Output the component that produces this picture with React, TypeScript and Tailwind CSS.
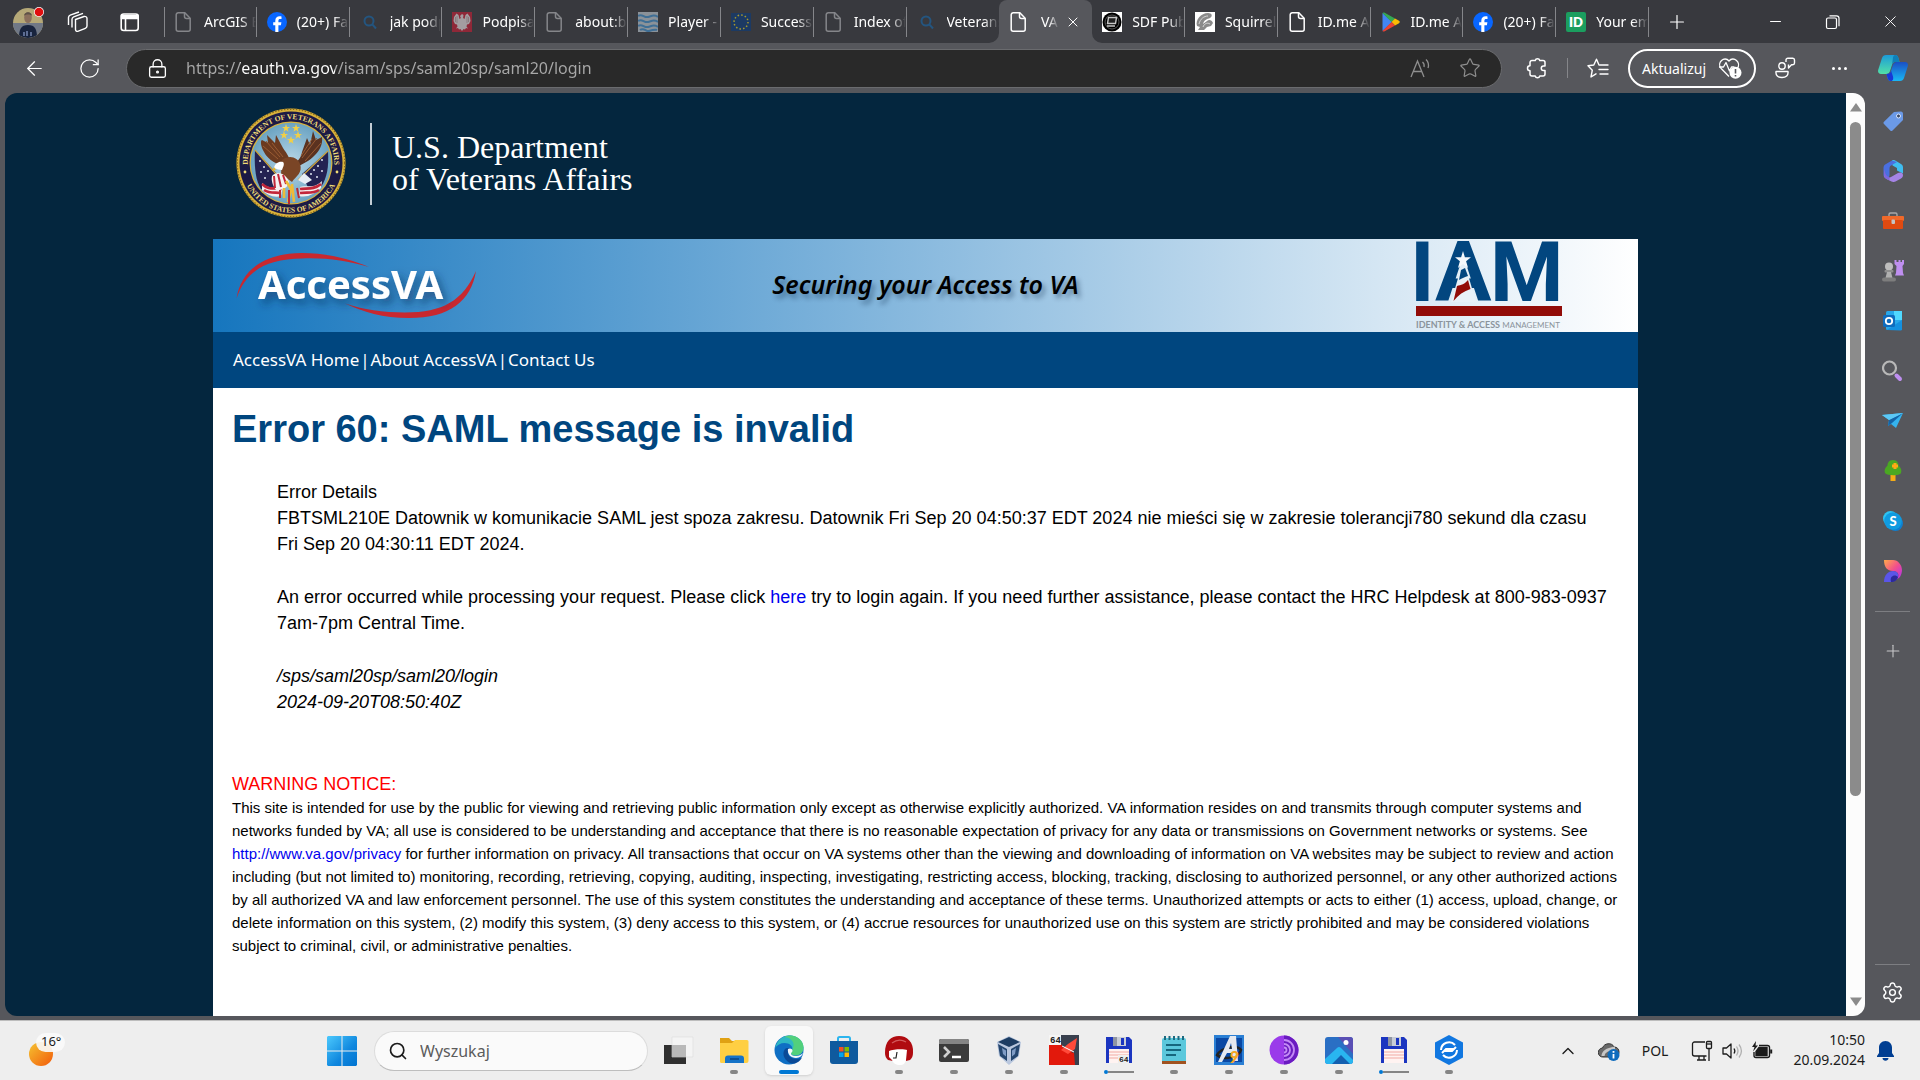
import React from "react";
import {
  ArrowLeft,
  RotateCw,
  LockKeyhole,
  Star,
  Plus,
  X,
  Minus,
  Settings,
  ChevronUp,
  Search,
} from "lucide-react";

type P = { className?: string };

const FileIcon = ({ className = "" }: P) => (
  <svg viewBox="0 0 20 20" className={className} fill="none" stroke="currentColor" strokeWidth="1.5">
    <path d="M4.2 .8h6.6l5.4 5.4v11a2 2 0 0 1-2 2h-10a2 2 0 0 1-2-2v-14.400a2 2 0 0 1 2-2z" />
    <path d="M10.500 .8v3.700a2 2 0 0 0 2 2h3.600" />
  </svg>
);

const FacebookIcon = ({ className = "" }: P) => (
  <svg viewBox="0 0 20 20" className={className}>
    <circle cx="10" cy="10" r="10" fill="#0866ff" />
    <path d="M8.300 19.900v-6.600H6.200v-3h2.100V8.900c0-3.200 1.500-4.700 4.500-4.700.6 0 1.300.1 1.700.2V7.100h-1.300c-1.300 0-1.800.5-1.800 1.900v1.300h3l-.5 3h-2.500v6.600z" fill="#fff" />
  </svg>
);

const BlueSearch = ({ className = "" }: P) => (
  <svg viewBox="0 0 20 20" className={className} fill="none" stroke="#24557f" strokeWidth="2">
    <circle cx="9" cy="9" r="4.500" />
    <path d="M12.300 12.300L16 16.500" />
  </svg>
);

const EagleIcon = ({ className = "" }: P) => (
  <svg viewBox="0 0 20 20" className={className}>
    <rect width="20" height="20" fill="#8f2838" />
    <path d="M10 2l1.500 1-.4 3 1.400 1 1-4 2-1.500 2.500 3.500.5 4-1.500 3-2 .5-.5 2 1.500 2-2-.5-1 1.500-1.400-.5L10 19l-1.600-2-1.400.5-1-1.500-2 .5 1.500-2-.5-2-2-.5-1.500-3 .5-4L4.500 1.500l2 1.500 1 4 1.400-1L8 4z" fill="#a39da0" />
    <path d="M5 4v7M15 4v7M3.500 5v5M16.500 5v5" stroke="#7e6c70" strokeWidth=".7" />
  </svg>
);

const WavesIcon = ({ className = "" }: P) => (
  <svg viewBox="0 0 20 20" className={className} fill="none" stroke="#3f6f96" strokeWidth="2">
    <rect width="20" height="20" fill="#8b9299" stroke="none" />
    <path d="M0 4c4-3 6 2 10 1s6-3 10 0M0 9c4-3 6 2 10 1s6-3 10 0M0 14c4-3 6 2 10 1s6-3 10 0M2 18c4-3 6 2 9 1s6-2 8-1" />
  </svg>
);

const EuIcon = ({ className = "" }: P) => (
  <svg viewBox="0 0 20 20" className={className}>
    <rect y="1" width="20" height="18" fill="#1c3a63" />
    <circle cx="10" cy="10" r="7" fill="none" stroke="#a89a2c" strokeWidth="1.500" strokeDasharray="1.500 2.165" />
  </svg>
);

const SdfIcon = ({ className = "" }: P) => (
  <svg viewBox="0 0 20 20" className={className}>
    <rect width="20" height="20" fill="#fff" />
    <circle cx="10" cy="10" r="9.500" fill="#000" />
    <circle cx="10" cy="10" r="7" fill="none" stroke="#555" strokeWidth="1" />
    <path d="M6.500 5.500h8l-1 6h-8zM5 14h8" fill="#222" stroke="#c8c8c8" strokeWidth="1.400" />
  </svg>
);

const SquirrelIcon = ({ className = "" }: P) => (
  <svg viewBox="0 0 20 20" className={className}>
    <rect width="20" height="20" fill="#fff" />
    <path d="M2 14C0 8 6 1 13 1c4 0 5 3 2 5-3 1-6 2-7 6l4-3c2-2 5-1 6 2l-2 3-4 1-3 3H3l2-3z" fill="#8a8a8a" />
    <path d="M4 12c1-5 5-8 9-8M8 15c1-3 4-5 7-3" stroke="#d6d6d6" fill="none" />
  </svg>
);

const PlayIcon = ({ className = "" }: P) => (
  <svg viewBox="0 0 20 20" className={className}>
    <path d="M1.500 1v18L11 10z" fill="#4285f4" />
    <path d="M1.500 1c.6-.8 1.400-.7 2.200-.2L14 6.600 10.500 10z" fill="#34a853" />
    <path d="M14 6.600l4 2.200c1 .6 1 1.800 0 2.400l-4 2.200L10.500 10z" fill="#fbbc04" />
    <path d="M1.500 19c.6.800 1.400.7 2.200.2L14 13.400 10.500 10z" fill="#ea4335" />
  </svg>
);

const IdIcon = ({ className = "" }: P) => (
  <svg viewBox="0 0 20 20" className={className}>
    <rect width="20" height="20" rx="2" fill="#1b9e5f" />
    <text x="10" y="15" textAnchor="middle" fontSize="13" fontWeight="800" fill="#fff" fontFamily="Lato, sans-serif">ID</text>
  </svg>
);

type Tab = { title: string; icon: React.FC<P>; tone?: string; active?: boolean; sep?: boolean };

const tabs: Tab[] = [
  { title: "ArcGIS E", icon: FileIcon, tone: "text-[#85868a]", sep: true },
  { title: "(20+) Fa", icon: FacebookIcon, sep: true },
  { title: "jak podp", icon: BlueSearch, sep: true },
  { title: "Podpisa", icon: EagleIcon, sep: true },
  { title: "about:b", icon: FileIcon, tone: "text-[#85868a]", sep: true },
  { title: "Player -", icon: WavesIcon, sep: true },
  { title: "Success", icon: EuIcon, sep: true },
  { title: "Index of", icon: FileIcon, tone: "text-[#85868a]", sep: true },
  { title: "Veterans", icon: BlueSearch },
  { title: "VA", icon: FileIcon, tone: "text-white", active: true },
  { title: "SDF Pub", icon: SdfIcon, sep: true },
  { title: "Squirrel", icon: SquirrelIcon, sep: true },
  { title: "ID.me A", icon: FileIcon, tone: "text-white", sep: true },
  { title: "ID.me A", icon: PlayIcon, sep: true },
  { title: "(20+) Fa", icon: FacebookIcon, sep: true },
  { title: "Your em", icon: IdIcon, sep: true },
];

function TabItem({ tab }: { tab: Tab }) {
  const Icon = tab.icon;
  if (tab.active) {
    return (
      <div className="relative flex h-full min-w-0 items-center rounded-t-lg bg-[#56575c]">
        <svg viewBox="0 0 10 10" className="absolute bottom-0 -left-2.5 size-2.5"><path d="M10 0v10H0A10 10 0 0 0 10 0z" fill="#56575c" /></svg>
        <svg viewBox="0 0 10 10" className="absolute -right-2.5 bottom-0 size-2.5"><path d="M0 0v10h10A10 10 0 0 1 0 0z" fill="#56575c" /></svg>
        <button className="ml-[10px] flex min-w-0 items-center gap-2.5 text-[14px] text-white">
          <Icon className={"size-5 shrink-0 " + (tab.tone ?? "")} />
          <span className="w-5 overflow-hidden whitespace-nowrap [mask-image:linear-gradient(to_right,#000_50%,transparent)]">{tab.title}</span>
        </button>
        <button aria-label="Zamknij kartę" className="ml-1.5 text-white"><X size={16} strokeWidth={1.500} /></button>
      </div>
    );
  }
  return (
    <div className="flex h-full min-w-0 items-center">
      <button className="flex min-w-0 flex-1 items-center gap-2.5 overflow-hidden pl-[10px] text-[14px] text-white">
        <Icon className={"size-5 shrink-0 " + (tab.tone ?? "")} />
        <span className="flex-1 overflow-hidden text-left whitespace-nowrap [mask-image:linear-gradient(to_right,#000_70%,transparent)]">{tab.title}</span>
      </button>
      {tab.sep && <span className="h-[30px] w-px shrink-0 bg-[#85868a]" />}
    </div>
  );
}

function TabBar() {
  return (
    <header className="flex h-[43px] shrink-0 items-center bg-[#38393e] text-white">
      <div className="flex w-[164px] shrink-0 items-center">
        <button aria-label="Profil" className="ml-3">
          <svg viewBox="0 0 32 32" className="size-8">
            <clipPath id="avatar"><circle cx="16" cy="17" r="15" /></clipPath>
            <g clipPath="url(#avatar)">
              <rect width="32" height="32" fill="#b5a877" />
              <rect y="17" width="32" height="15" fill="#707886" />
              <path d="M7 32c0-9 2-13 9-13s9 4 9 13z" fill="#18243e" />
              <ellipse cx="16" cy="11.500" rx="3.800" ry="5.500" fill="#8a6f5c" />
              <path d="M12 10c0-5 8-5 8 0-1-2-7-2-8 0z" fill="#5e5248" />
              <path d="M12 26v4M15 25v5M19 26v4" stroke="#7486b0" strokeWidth="1.500" />
            </g>
            <circle cx="27" cy="6" r="5" fill="#fff" />
            <circle cx="27" cy="6" r="4.300" fill="#e00f0f" />
          </svg>
        </button>
        <button aria-label="Obszary robocze" className="ml-[22px]">
          <svg viewBox="0 0 22 22" className="size-[22px]" fill="none" stroke="#fff" strokeWidth="1.400">
            <path d="M9.500 8.500l8.500-3c1.500-.5 3 .5 3 2v7.500c0 1.200-.7 2-1.700 2.400l-7 2.800c-1.600.6-2.800-.3-2.800-1.700zM6 16.500V8.300C6 7 6.600 6.300 7.700 5.900L17 2.400M2.500 14V6.500c0-1.300.6-2 1.700-2.400L13 1" />
          </svg>
        </button>
        <button aria-label="Menu kart" className="ml-8">
          <svg viewBox="0 0 20 20" className="size-5" fill="none" stroke="#fff" strokeWidth="1.600">
            <rect x="1.200" y="2" width="17" height="16.500" rx="2.500" />
            <path d="M1.500 3.500h16.400v3H1.500z" fill="#fff" />
            <path d="M5.500 6v12.500" />
          </svg>
        </button>
      </div>
      <nav aria-label="Karty" className="grid h-full min-w-0 flex-1 grid-cols-[repeat(16,minmax(0,1fr))] items-center bg-[linear-gradient(#85868a,#85868a)] bg-[length:1px_30px] bg-left bg-no-repeat">
        {tabs.map((t, i) => <TabItem key={i} tab={t} />)}
      </nav>
      <button aria-label="Nowa karta" className="ml-[17px]"><Plus size={22} strokeWidth={1.300} /></button>
      <div className="ml-[79px] flex w-[153px] items-center justify-between pr-[20px]">
        <button aria-label="Minimalizuj"><Minus size={17} strokeWidth={1.500} /></button>
        <button aria-label="Przywróć">
          <svg viewBox="0 0 16 16" className="size-4" fill="none" stroke="#fff" strokeWidth="1.200">
            <rect x="1.500" y="4" width="10" height="10.500" rx="1.500" />
            <path d="M4.500 1.800h7c1.500 0 2.500 1 2.500 2.500v8" />
          </svg>
        </button>
        <button aria-label="Zamknij"><X size={19} strokeWidth={1.200} /></button>
      </div>
    </header>
  );
}

const CopilotIcon = () => (
  <svg viewBox="0 0 30 28" className="h-7 w-[30px]">
    <defs>
      <linearGradient id="cpA" x1="0" y1="0" x2="0" y2="1"><stop offset="0" stopColor="#1c9bd8" /><stop offset="1" stopColor="#52e0a8" /></linearGradient>
      <linearGradient id="cpB" x1="0" y1="0" x2="0" y2="1"><stop offset="0" stopColor="#1a4fc4" /><stop offset="1" stopColor="#1ab8f4" /></linearGradient>
    </defs>
    <path d="M8 1h9c2.500 0 3 1.500 3.700 4l.8 3h-4c-2 0-3 1-3.500 3l-2 6c-.6 2-1.500 3-4 3H3c-2.500 0-3.500-2-2.700-4.500L4 4c.7-2 2-3 4-3z" fill="url(#cpA)" />
    <path d="M22 27h-9c-2.500 0-3-1.500-3.700-4l-.8-3c3 0 3.500-1 4-3l2-6c.6-2 1.500-3 4-3H27c2.500 0 3.500 2 2.700 4.500L26 24c-.7 2-2 3-4 3z" fill="url(#cpB)" />
    <path d="M8.500 20c3 0 3.800-1.200 4.500-3.500l2 6c.5 2 .3 4.500-2 4.500-2.500 0-3-1.500-3.700-4z" fill="#1838d6" />
    <path d="M17 1c2.500 0 3 1.500 3.700 4l.8 3h-4c-2 0-3 1-3.500 3L15 3.500c.4-1.500 1-2.500 2-2.500z" fill="#0f7fb8" />
    <path d="M12.500 17l2-6c.4-1.300.9-2.200 1.800-2.600h1.500c-1.800.3-2.600 1.600-3 3.200l-2 6c-.5 1.600-1.200 2.400-2.800 2.400 1.500-.4 2-1.400 2.500-3z" fill="#56575c" />
  </svg>
);

function Toolbar() {
  return (
    <div className="flex h-[50px] shrink-0 items-center text-white">
      <button aria-label="Wstecz" className="ml-[23px]"><ArrowLeft size={23} strokeWidth={1.300} /></button>
      <button aria-label="Odśwież" className="ml-8"><RotateCw size={23} strokeWidth={1.300} /></button>
      <div className="ml-[25px] flex h-[39px] min-w-0 flex-1 items-center rounded-full border border-[#6a6b6e] bg-[#292929]">
        <button aria-label="Informacje o witrynie" className="ml-5"><LockKeyhole size={21} strokeWidth={1.500} /></button>
        <input
          aria-label="Adres"
          readOnly
          value="https://eauth.va.gov/isam/sps/saml20sp/saml20/login"
          className="ml-[18px] min-w-0 flex-1 bg-[linear-gradient(to_right,#a9a9a9_54px,#fff_54px,#fff_149px,#a9a9a9_149px)] bg-clip-text text-[16px] text-transparent outline-none"
        />
        <button aria-label="Czytaj na głos" className="mr-7 text-[#8f8f8f]">
          <svg viewBox="0 0 22 22" className="size-[22px]" fill="none" stroke="currentColor" strokeWidth="1.300">
            <path d="M2 20L8.500 4 15 20M4.500 14.500h8M13.500 5c1.500 1.300 2 3 1.500 5M17 2.500c2.500 2.500 3 5.500 2 8.500" />
          </svg>
        </button>
        <button aria-label="Dodaj do ulubionych" className="mr-5 text-[#8f8f8f]"><Star size={22} strokeWidth={1.300} /></button>
      </div>
      <button aria-label="Rozszerzenia" className="ml-6">
        <svg viewBox="0 0 22 22" className="size-[22px]" fill="none" stroke="#fff" strokeWidth="1.500" strokeLinejoin="round">
          <path d="M6 3.500h3.200a2.400 2.400 0 0 1 4.600 0H17a2 2 0 0 1 2 2V9h-1.500a2 2 0 0 0 0 4.500H19V17a2 2 0 0 1-2 2h-3.200a2.400 2.400 0 0 1-4.600 0H6a2 2 0 0 1-2-2v-3.300a2.500 2.500 0 0 1 0-5V5.500a2 2 0 0 1 2-2z" />
        </svg>
      </button>
      <span className="ml-[19px] h-5 w-px bg-[#85868a]" />
      <button aria-label="Ulubione" className="ml-[19px]">
        <svg viewBox="0 0 22 22" className="size-[22px]" fill="none" stroke="#fff" strokeWidth="1.400" strokeLinejoin="round" strokeLinecap="round">
          <path d="M12 8L9.500 2.200 6.800 8 1 8.700l4.300 4.500L4 20l5-3.200M13 8h8M12 12.500h9M13 17h8" />
        </svg>
      </button>
      <button className="ml-[19px] flex h-[39px] w-[128px] items-center justify-center gap-3 rounded-full border-2 border-white text-[14px]">
        Aktualizuj
        <svg viewBox="0 0 24 22" className="h-[22px] w-6" fill="none" stroke="#fff" strokeWidth="1.300" strokeLinejoin="round">
          <path d="M11 19.500L3.200 11.500C-1.800 5.500 6.500-1.500 11 4c4.500-5.500 12.800 1.500 8.200 7.500" />
          <path d="M1 10h4.500L8 5.500l3.500 8.500 2-4h3" />
          <circle cx="17.500" cy="15.800" r="6" fill="#fff" stroke="none" />
          <path d="M17.500 12v4.500M17.500 18v1.500" stroke="#56575c" strokeWidth="1.600" />
        </svg>
      </button>
      <button aria-label="Opinia" className="ml-[18px]">
        <svg viewBox="0 0 22 22" className="size-[22px]" fill="none" stroke="#fff" strokeWidth="1.400" strokeLinejoin="round">
          <circle cx="8" cy="9" r="3.200" />
          <path d="M2 14.500h12c.5 4-2 6-6 6s-6.500-2-6-6zM12 5V3a1.800 1.800 0 0 1 1.800-1.800h5A1.800 1.800 0 0 1 20.500 3v3a1.800 1.800 0 0 1-1.700 1.800h-1.300L14.500 11V7.600" />
        </svg>
      </button>
      <button aria-label="Więcej" className="ml-9 flex gap-[3px]">
        <span className="size-[3px] rounded-full bg-white" /><span className="size-[3px] rounded-full bg-white" /><span className="size-[3px] rounded-full bg-white" />
      </button>
      <button aria-label="Copilot" className="mr-3 ml-[31px]"><CopilotIcon /></button>
    </div>
  );
}

const sideIcons: { label: string; art: React.ReactNode }[] = [
  { label: "Zakupy", art: <><path d="M12 2l7-.5c1 0 2 1 2 2V10L10.500 20.500c-.7.7-1.500.7-2.200 0L2 14c-.7-.7-.7-1.500 0-2.200z" fill="#6b9ae8" /><circle cx="16.500" cy="6" r="2" fill="#3a4a66" stroke="#dbe8ff" strokeWidth="1" /></> },
  { label: "Microsoft 365", art: <><path d="M10 .5c1.500-.7 2.500-.5 4 .4l5 3c1.500 1 2 2 2 3.500v6l-6-3V8L10.500 5.500z" fill="#3fbdf0" /><path d="M10 .5L4 4C2 5 1.500 6.500 1.500 8v7c0 2 1.500 3 3 3s3-1 3-3V8.500c0-1.500.7-2.500 2-3.200L15 2z" fill="#4a6fe0" /><path d="M2 9v6c0 2 1 3 2.500 4l5 2.500c1.500.7 2.500.7 4 0l5.500-3c1.500-1 2-2 2-3.500 0-2-2.500-3.500-5-2L9 17c-2 1-4 1-5.500-1C2.500 14.500 2 12 2 9z" fill="#a584e6" /><path d="M2 9v6c0 2 1 3 2.500 4l3 1.500V17C5 17 3 14 2 9z" fill="#7d66dc" /></> },
  { label: "Narzędzia", art: <><path d="M7 6V4.500C7 3.500 7.500 3 8.500 3h5c1 0 1.500.5 1.500 1.500V6" fill="none" stroke="#a8a8a8" strokeWidth="1.400" /><rect x="0" y="6" width="22" height="5" rx="1" fill="#f0692a" /><rect x="1" y="10" width="20" height="9" rx="1" fill="#e04a10" /><rect x="9.500" y="9.500" width="3.500" height="4.500" rx="1" fill="#c4c4c4" /></> },
  { label: "Gry", art: <><circle cx="7" cy="6.500" r="4" fill="#bdbdbd" /><rect x="2.500" y="10" width="9" height="2.500" rx="1" fill="#8f8f8f" /><path d="M5 12h4l1.500 6h-7z" fill="#b0b0b0" /><rect x="0" y="17.500" width="14" height="4" rx="2" fill="#7d7d7d" /><path d="M12.500 0h2v2h2V0h2v2h1.500V0h2v4l-1.500 2 .5 7 1 2.500h-9l1-2.500.5-7-2-2z" fill="#bf8ff0" /></> },
  { label: "Outlook", art: <><rect x="4" y="1" width="16" height="19" rx="1.500" fill="#28a8ea" /><rect x="12" y="1" width="8" height="9" fill="#50d9ff" /><path d="M5 20L20 10v9a1.500 1.500 0 0 1-1.500 1.500z" fill="#1490df" /><rect x="1" y="5" width="12" height="12" rx="1.500" fill="#0f6cbd" /><circle cx="7" cy="11" r="3.200" fill="none" stroke="#fff" strokeWidth="1.800" /></> },
  { label: "Szukaj", art: <><circle cx="7.500" cy="8" r="6.500" fill="none" stroke="#b8b8b8" strokeWidth="2.200" /><path d="M14.500 15.500l3.500 3.500" stroke="#bf8ff0" strokeWidth="4" strokeLinecap="round" /></> },
  { label: "Drop", art: <><path d="M0 5l21-2-7 15-5-4-3 2 1-6z" fill="#35b3ee" /><path d="M21 3L7 10l-1 6 4-3z" fill="#1464a8" /><path d="M0 5l21-2L7 10z" fill="#5cc8f5" /></> },
  { label: "E-drzewo", art: <><rect x="8.500" y="15" width="5" height="6" fill="#f5ac16" /><path d="M11 0c4 0 5.500 3 5.500 5.500C19 8 20 10 19 13c-1 3-14 3-16 0-1-3 0-5 2.500-7.500C5.500 3 7 0 11 0z" fill="#4aa822" /><path d="M13 3v6M10 6h6" stroke="#ffa914" strokeWidth="3" /></> },
  { label: "Skype", art: <><circle cx="8.500" cy="8.500" r="7.500" fill="#2dc4f2" /><circle cx="13.500" cy="13.500" r="7.500" fill="#0f7fd0" /><circle cx="11" cy="11" r="8.800" fill="#109be0" /><text x="11" y="15.500" fontSize="13" textAnchor="middle" fontWeight="900" fill="#fff" fontFamily="Lato, sans-serif">S</text></> },
  { label: "Designer", art: <><path d="M2 0h9c5 0 9 5 9 10s-3 9-5 9c3-4 1-8-4-8C5 11 2 7 2 0z" fill="url(#dsA)" /><path d="M2 22c0-7 4-11 9-11 4 0 6 3 5 6s-4 5-8 5z" fill="#5a55e8" /><path d="M9 22c-2-7 5-8 7-5-1 3-3 5-7 5z" fill="#2c2a9c" /></> },
];

function Sidebar() {
  return (
    <aside className="flex w-[55px] shrink-0 flex-col items-center">
      <svg className="absolute size-0"><linearGradient id="dsA" x1="0" y1="0" x2="1" y2="1"><stop offset="0" stopColor="#ffab4a" /><stop offset=".5" stopColor="#f2508a" /><stop offset="1" stopColor="#b030f0" /></linearGradient></svg>
      <div className="flex flex-col items-center gap-7 pt-[17px]">
        {sideIcons.map((s) => (
          <button key={s.label} aria-label={s.label} className="size-[22px]">
            <svg viewBox="0 0 22 22" className="size-[22px]">{s.art}</svg>
          </button>
        ))}
      </div>
      <hr className="mt-[29px] w-[35px] border-[#7d7e82]" />
      <button aria-label="Dostosuj" className="mt-[29px] text-[#c8c8ca]"><Plus size={20} strokeWidth={1.300} /></button>
      <hr className="mt-auto w-[35px] border-[#7d7e82]" />
      <button aria-label="Ustawienia" className="mt-4 mb-4"><Settings size={23} strokeWidth={1.500} color="#fff" /></button>
    </aside>
  );
}

const star = "M0-4l1 2.900h3L1.600.7l.9 3L0 1.900-2.500 3.700l.9-3L-4-1.100h3z";

function Seal() {
  return (
    <svg viewBox="0 0 110 110" className="size-[110px]" role="img" aria-label="Department of Veterans Affairs seal">
      <defs>
        <path id="arcTop" d="M12.500 62A43.200 43.200 0 1 1 97.500 62" />
        <path id="arcBottom" d="M7.500 69A49.500 49.500 0 0 0 102.500 69" />
        <radialGradient id="sky"><stop offset="0" stopColor="#b9d8e8" /><stop offset="1" stopColor="#6ba3c2" /></radialGradient>
      </defs>
      <circle cx="55" cy="55" r="54.500" fill="#d9b23a" />
      <circle cx="55" cy="55" r="53.800" fill="none" stroke="#8a6a1d" strokeWidth="1.400" strokeDasharray="1.500 1.500" />
      <circle cx="55" cy="55" r="51.500" fill="#1c1a45" />
      <circle cx="55" cy="55" r="41.500" fill="#d9b23a" />
      <circle cx="55" cy="55" r="40.300" fill="url(#sky)" />
      <g fill="#f0dc78" fontFamily="Liberation Serif, serif" fontWeight="700" fontSize="7.500">
        <text><textPath href="#arcTop" startOffset="50%" textAnchor="middle">DEPARTMENT OF VETERANS AFFAIRS</textPath></text>
        <text><textPath href="#arcBottom" startOffset="50%" textAnchor="middle">UNITED STATES OF AMERICA</textPath></text>
      </g>
      <circle cx="9" cy="64" r="1.400" fill="#f0dc78" /><circle cx="101" cy="64" r="1.400" fill="#f0dc78" />
      <path d="M19 42l24 26-8 17-10-4c-5-8-7-20-6-39z" fill="#232252" />
      <path d="M92 43L66 66l8 18 11-5c6-9 8-20 7-36z" fill="#232252" />
      <g fill="#dfe6f2"><circle cx="24" cy="53" r="1" /><circle cx="28" cy="59" r="1" /><circle cx="25" cy="64" r="1" /><circle cx="32" cy="63" r="1" /><circle cx="29" cy="70" r="1" /><circle cx="86" cy="52" r="1" /><circle cx="82" cy="58" r="1" /><circle cx="86" cy="63" r="1" /><circle cx="78" cy="62" r="1" /><circle cx="81" cy="69" r="1" /><circle cx="75" cy="66" r="1" /></g>
      <path d="M19 42l28 32M92 43L62 72" stroke="#c9a33c" strokeWidth="1.200" />
      <path d="M26 75c8 8 14 2 21 4l-2 9c-7 2-14-1-19-6zM86 73c-8 8-14 4-22 6l-1 9c8 2 16-2 22-8z" fill="#f3eeee" />
      <path d="M26 76c7 7 13 3 20 5M28 82c6 4 11 2 17 3M85 76c-7 6-14 4-21 5M83 82c-6 4-12 2-19 3" stroke="#c2263a" strokeWidth="2.600" fill="none" />
      <path d="M52 58C42 58 32 52 28 44c-3-5-4-11-2-12l6 3-1-8 8 8 1-8 7 13c4 6 7 9 8 18z" fill="#6b3a20" />
      <path d="M54 58c8-4 11-8 12-14l5-14 3 7 3-14 3 9 6-3c1 8-3 14-7 18-5 6-13 9-20 13z" fill="#5a3220" />
      <path d="M30 33l14 16M36 35l11 14M27 38l15 13M81 30L66 50M85 35L69 53M76 31l-11 17" stroke="#9a5c33" strokeWidth="1" />
      <path d="M46 52c8-6 16-2 18 4 3 9-4 12-8 18l-11-8z" fill="#7a4526" />
      <path d="M38 60c1-5 5-7 9-6 2 2 0 5-1 8-3 0-5-1-8-2z" fill="#fff" />
      <path d="M38 59l-2 4 4-1z" fill="#e6b62e" />
      <path d="M36 68c6-6 14-2 17 6-2 8-9 8-13 8-3-4-5-9-4-14z" fill="#f5f1f1" />
      <path d="M38 68l1 12M42 66l3 13M47 67l3 9" stroke="#c2263a" strokeWidth="2" />
      <path d="M62 72l6-7 8 7-7 4z" fill="#e7edf5" />
      <path d="M50 73l5 8-3 13M56 76l2 18M48 80v10" stroke="#eebb38" strokeWidth="2.600" fill="none" />
      <path d="M53 82v14M61 80l2 10M44 82v8" stroke="#b82a34" strokeWidth="2" />
      <g fill="#f2cf45">
        <path transform="translate(50 20)" d={star} /><path transform="translate(60 20)" d={star} />
        <path transform="translate(48 27)" d={star} /><path transform="translate(62 27)" d={star} />
        <path transform="translate(55 32)" d={star} />
      </g>
    </svg>
  );
}

function AccessVALogo() {
  return (
    <svg viewBox="0 0 270 93" className="h-[93px] w-[270px]" role="img" aria-label="AccessVA">
      <filter id="soft" x="-20%" y="-20%" width="150%" height="160%"><feDropShadow dx="4" dy="5" stdDeviation="4" floodColor="#0a2f58" floodOpacity=".6" /></filter>
      <path d="M23.500 59.500C28 30 53 14 89 14c25 0 48 6 67 14-22-6-43-9.500-67-8.500C54 20 33 31 23.500 59.500z" fill="#c8282f" />
      <path d="M132 64.500c18 6 38 9 60 9 38 0 58-12 71-41.500C258 62 237 79 196 79c-26 0-46-6-64-14.500z" fill="#c8282f" />
      <text x="45" y="60" fontSize="40" fontWeight="700" fill="#fff" fontFamily="Noto Sans, Open Sans, sans-serif" filter="url(#soft)">AccessVA</text>
    </svg>
  );
}

function IamLogo() {
  return (
    <svg viewBox="0 0 147 93" className="h-[93px] w-[147px]" role="img" aria-label="IAM Identity & Access Management">
      <g fill="#02467f" fontFamily="Roboto, sans-serif" fontWeight="700" fontSize="84">
        <text x="-6" y="62">I</text>
        <text x="19" y="62">A</text>
        <text x="74" y="62">M</text>
      </g>
      <path d="M35 63L45 29h5l10 34z" fill="#e8f1f8" />
      <path d="M47 12l1.900 6.300H55l-4.900 3.900 2 6.800-5.100-4-5.100 4 2-6.800-4.900-3.900h6.100z" fill="#f4f8fc" />
      <path d="M45 31l4-2 3 8c-3 1-6 2-9 4z" fill="#02467f" />
      <path d="M41 47c4-1 8-2 11-6l2.500 9C48 52 42 56 37.500 62z" fill="#920c08" />
      <rect y="67" width="146" height="10" fill="#920c08" />
      <text x="0" y="89" fontSize="9" fill="#8b949c" fontFamily="Lato, sans-serif"><tspan fontWeight="700">IDENTITY &amp; ACCESS</tspan> <tspan fontSize="8">MANAGEMENT</tspan></text>
    </svg>
  );
}

function Page() {
  return (
    <main className="min-w-0 flex-1 overflow-hidden rounded-l-xl bg-[#04263e] px-52 font-['Liberation_Sans',Arial,sans-serif] text-black">
      <div className="flex h-full flex-col">
        <div className="flex shrink-0 items-start pt-[15px] pb-[21px] pl-[23px]">
          <Seal />
          <span className="mt-[15px] ml-6 h-[82px] w-[2px] bg-[#c3cdd5]" />
          <p className="mt-[23px] ml-5 font-['Liberation_Serif',serif] text-[32px] leading-8 font-medium text-white">
            U.S. Department<br />of Veterans Affairs
          </p>
        </div>
        <div className="grid shrink-0 grid-cols-[1fr_auto_1fr] items-center bg-[linear-gradient(to_right,#1676be,#fff)]">
          <AccessVALogo />
          <p className="pb-px font-['Noto_Sans','Open_Sans',sans-serif] text-[25px] font-semibold text-black italic [text-shadow:3px_4px_5px_rgba(0,30,60,0.4)]">Securing your Access to VA</p>
          <div className="justify-self-end pr-[75px]"><IamLogo /></div>
        </div>
        <nav className="flex h-14 shrink-0 items-center gap-px bg-[#00467f] px-5 font-['Noto_Sans','Open_Sans',sans-serif] text-[17px] text-white">
          <a href="#home">AccessVA Home</a><span>|</span><a href="#about">About AccessVA</a><span>|</span><a href="#contact">Contact Us</a>
        </nav>
        <div className="min-h-0 flex-1 bg-white px-[19px]">
          <h1 className="pt-[18px] text-[38px] leading-[46px] font-bold text-[#00467f]">Error 60: SAML message is invalid</h1>
          <div className="mt-[27px] mr-2 ml-[45px] text-[18px] leading-[26px]">
            <p>Error Details<br />FBTSML210E Datownik w komunikacie SAML jest spoza zakresu. Datownik Fri Sep 20 04:50:37 EDT 2024 nie mieści się w zakresie tolerancji780 sekund dla czasu Fri Sep 20 04:30:11 EDT 2024.</p>
            <p className="mt-[27px]">An error occurred while processing your request. Please click <a href="#here" className="text-[#0000ee]">here</a> try to login again. If you need further assistance, please contact the HRC Helpdesk at 800-983-0937 7am-7pm Central Time.</p>
            <p className="mt-[27px] italic">/sps/saml20sp/saml20/login<br />2024-09-20T08:50:40Z</p>
          </div>
          <h2 className="mt-[58px] text-[18px] leading-[23px] text-[#f00]">WARNING NOTICE:</h2>
          <p className="text-[15px] leading-[23px]">
            This site is intended for use by the public for viewing and retrieving public information only except as otherwise explicitly authorized. VA information resides on and transmits through computer systems and networks funded by VA; all use is considered to be understanding and acceptance that there is no reasonable expectation of privacy for any data or transmissions on Government networks or systems. See <a href="#privacy" className="text-[#0000ee]">http://www.va.gov/privacy</a> for further information on privacy. All transactions that occur on VA systems other than the viewing and downloading of information on VA websites may be subject to review and action including (but not limited to) monitoring, recording, retrieving, copying, auditing, inspecting, investigating, restricting access, blocking, tracking, disclosing to authorized personnel, or any other authorized actions by all authorized VA and law enforcement personnel. The use of this system constitutes the understanding and acceptance of these terms. Unauthorized attempts or acts to either (1) access, upload, change, or delete information on this system, (2) modify this system, (3) deny access to this system, or (4) accrue resources for unauthorized use on this system are strictly prohibited and may be considered violations subject to criminal, civil, or administrative penalties.
          </p>
        </div>
      </div>
    </main>
  );
}

function ScrollRail() {
  return (
    <div className="flex w-[19px] shrink-0 flex-col items-center rounded-r-xl bg-[#fcfcfc] py-[10px]">
      <svg viewBox="0 0 12 9" className="h-[9px] w-3"><path d="M6 0l6 8.500H0z" fill="#8b8b8b" /></svg>
      <div className="mt-[10px] flex w-[11px] flex-1 flex-col">
        <div className="h-[77%] rounded-full bg-[#8b8b8b]" />
      </div>
      <svg viewBox="0 0 12 9" className="h-[9px] w-3"><path d="M6 9L0 .5h12z" fill="#8b8b8b" /></svg>
    </div>
  );
}

type TaskApp = { label: string; art: React.ReactNode; mark?: "dot" | "active" | "bar" | "none" };

const Floppy = ({ n }: { n?: boolean }) => (
  <>
    <path d="M2 2h23l3 3v23H2z" fill="#1b35c0" />
    <path d="M9 2h13v9H9z" fill="#c9cdd6" /><path d="M17 3h3v7h-3z" fill="#1b35c0" /><path d="M9 2h4v9H9z" fill="#8f95a3" />
    <rect x="5" y="14" width="20" height="14" fill="#fff3f1" />
    <path d="M5 17h20M5 20h20M5 23h20" stroke="#f2a9a4" strokeWidth="1.200" />
    {n && <><rect x="14" y="20" width="11" height="8" fill="#eee" /><text x="15" y="27" fontSize="8" fontWeight="700" fontFamily="Liberation Mono, monospace" fill="#222">64</text></>}
  </>
);

const apps: TaskApp[] = [
  { label: "Eksplorator plików", mark: "dot", art: <><path d="M1 3h9l3 3h16v5H1z" fill="#e0a113" /><path d="M1 8h12l3-3h12a1.500 1.500 0 0 1 1.500 1.500V26a2 2 0 0 1-2 2H2.500A1.500 1.500 0 0 1 1 26.500z" fill="#ffcf43" /><path d="M6 28v-4.500a3 3 0 0 1 3-3h13a3 3 0 0 1 3 3V28z" fill="#1673c8" /><path d="M11 24h9" stroke="#0d4f93" strokeWidth="2" /></> },
  { label: "Microsoft Edge", mark: "active", art: <><circle cx="15" cy="15" r="14.500" fill="#0f6fc4" /><path d="M1 13C3 5 9 .5 16 .5c8 0 13.500 6 13.500 12 0 5-4 8-8 8-3 0-4.500-1.500-4.500-2.500s1.500-1.500 1.500-4c0-3-3-6-8-6-4 0-7.500 2-9.500 5z" fill="#2fb7c4" /><path d="M16 .5c8 0 13.500 6 13.500 12 0 5-4 8-8 8-3 0-4.500-1.500-4.500-2.500s1.500-1.500 1.500-4c3-5 0-11-8-12 2-1 3.500-1.500 5.500-1.500z" fill="#52d07c" /><path d="M11 14c-4 5 0 13 7 14.500 4 .5 8-2 10-6-6 3-13 1-14-4-.3-2 .5-4 2-5-2-.8-4-.5-5 .5z" fill="#0b4a97" /><path d="M14 14c2-1.500 5 0 4.500 2-.5 1.500-1.500 1.500-1.500 2.500 0 1.500 2.500 3 5 2.500 3 0 5-1 7-3-1 3-3 4.500-7 5-5 0-9-4-8-9z" fill="#f4f7fb" /></> },
  { label: "Microsoft Store", mark: "none", art: <><path d="M9 7V3.500A1.500 1.500 0 0 1 10.500 2h9A1.500 1.500 0 0 1 21 3.500V7" fill="none" stroke="#2cb5ee" strokeWidth="2" /><path d="M1 6h28v20a3 3 0 0 1-3 3H4a3 3 0 0 1-3-3z" fill="#0f5a9e" /><path d="M10 12h4.500v4.500H10z" fill="#f25022" /><path d="M15.500 12H20v4.500h-4.500z" fill="#7fba00" /><path d="M10 17.500h4.500V22H10z" fill="#00a4ef" /><path d="M15.500 17.500H20V22h-4.500z" fill="#ffb900" /></> },
  { label: "Irfan", mark: "dot", art: <><path d="M1 18C1 6 7 1 15 1s15 6 14 17c0 3-1 5-3 7l-4 1-2-10H8l1 10-5-1c-2-2-3-4-3-7z" fill="#b00b10" /><path d="M5 16c4-2 16-2 18-1l-1 10c-1 4-3 5-6 5-4 0-7-2-8-5l-3-3z" fill="#fff" /><path d="M8 8c4-3 9-4 14-1" stroke="#d25a5c" strokeWidth="1.200" fill="none" /><path d="M13 17l-1 6H9" stroke="#222" strokeWidth="1.200" fill="none" /></> },
  { label: "Terminal", mark: "dot", art: <><rect x="0" y="4" width="30" height="23" rx="2" fill="#3b3b3b" /><path d="M0 6a2 2 0 0 1 2-2h26a2 2 0 0 1 2 2v3H0z" fill="#858585" /><path d="M5 12l5 5-5 5" fill="none" stroke="#d0d0d0" strokeWidth="2.600" /><path d="M13 22h9" stroke="#fff" strokeWidth="2.500" /></> },
  { label: "VirtualBox", mark: "dot", art: <><path d="M15 1l12 6-2 14-10 9L5 21 3 7z" fill="#b9c7de" /><path d="M15 2l11 5-11 5L4 7z" fill="#1d3d63" /><path d="M4 9l9 5v12l-7-5zM26 9l-9 5v12l7-5z" fill="#24466f" /><path d="M8 13l4 2.500v6L9 19zM22 13l-4 2.500v6l3-2.500z" fill="#7f9cc6" /></> },
  { label: "Double Commander", mark: "dot", art: <><rect width="30" height="30" fill="#39404e" /><path d="M0 9h12l4 6 9 3 1 12H0z" fill="#e2190c" /><path d="M12 15l7-6 9-6-2 11-7 5z" fill="#ff4a3a" /><path d="M13 11l12 6" stroke="#fff" strokeWidth="1" /><rect width="12" height="10" fill="#f5f5f5" /><text x="1" y="8" fontSize="9" fontWeight="700" fontFamily="Liberation Mono, monospace" fill="#222">64</text></> },
  { label: "Total Commander 64", mark: "bar", art: <Floppy n /> },
  { label: "Notatnik", mark: "dot", art: <><path d="M5 3h20a2 2 0 0 1 2 2v22H3V5a2 2 0 0 1 2-2z" fill="#5bc8dc" /><path d="M3 26h24v3H3z" fill="#a0521f" /><path d="M6 1v4M10.500 1v4M15 1v4M19.500 1v4M24 1v4" stroke="#1c6a80" strokeWidth="2" /><path d="M7 10h15M7 15h15M7 20h10" stroke="#16677e" strokeWidth="2" /></> },
  { label: "Edytor", mark: "dot", art: <><rect width="30" height="30" fill="#2a7fd4" /><rect x="2" y="3" width="26" height="24" fill="#0a48a4" /><path d="M3 20c4-7 20-11 24-5-2 7-17 11-24 5z" fill="none" stroke="#222" strokeWidth="2.500" /><path d="M16 1L4 27h4l5-9h5l1 8h5L22 1zM17 8l1 6h-3z" fill="#e6e9ef" /><text x="15" y="28" fontSize="17" fontStyle="italic" fontWeight="900" fontFamily="Lato, sans-serif" fill="#f5a623">9</text></> },
  { label: "Tor Browser", mark: "dot", art: <><circle cx="15" cy="15" r="14.500" fill="#9a3bea" /><path d="M15 .5a14.500 14.500 0 0 1 0 29z" fill="#6a1cc0" /><path d="M15 5a10 10 0 0 1 0 20M15 9a6 6 0 0 1 0 12M15 12.500a2.500 2.500 0 0 1 0 5" fill="none" stroke="#c48bf5" strokeWidth="1.800" /></> },
  { label: "Zdjęcia", mark: "dot", art: <><rect x="1" y="2" width="28" height="27" rx="3" fill="#2a6fc4" /><path d="M14 2h12a3 3 0 0 1 3 3v14z" fill="#5a4fb4" /><path d="M1 24l12-11a3 3 0 0 1 4 0l12 12v1a3 3 0 0 1-3 3H4a3 3 0 0 1-3-3z" fill="#29b6f0" /><path d="M8 29l9-9 9 9z" fill="#1460b0" /><circle cx="22" cy="7.500" r="2.500" fill="#fff" /></> },
  { label: "Total Commander", mark: "bar", art: <Floppy /> },
  { label: "Synchronizacja", mark: "dot", art: <><path d="M15 0l14 7.500v15L15 30 1 22.500v-15z" fill="#1177e0" /><path d="M7 15a8 8 0 0 1 14-5M23 15a8 8 0 0 1-14 5M10 16h8l4-4M8 18l4-4h8" fill="none" stroke="#fff" strokeWidth="2" /></> },
];

function Taskbar() {
  return (
    <footer className="flex h-[60px] shrink-0 items-center border-t border-[#bdbdbd] bg-[#eeeeee] font-['Noto_Sans','Open_Sans',sans-serif] text-[#1b1b1b]">
      <button className="w-[327px] shrink-0 pl-7 text-left" aria-label="Pogoda 16°">
        <svg viewBox="0 0 40 38" className="h-[38px] w-10">
          <defs><linearGradient id="sun" x1="0" y1="0" x2="1" y2="1"><stop offset="0" stopColor="#f5c431" /><stop offset="1" stopColor="#f25a0a" /></linearGradient></defs>
          <circle cx="13" cy="22" r="12" fill="url(#sun)" />
          <rect x="8" y="1" width="29" height="19" rx="9.500" fill="#fafafa" fillOpacity=".9" />
          <text x="13" y="14" fontSize="13" fill="#1b1b1b">16°</text>
        </svg>
      </button>
      <button aria-label="Start">
        <svg viewBox="0 0 30 30" className="size-[30px]">
          <defs><linearGradient id="win" gradientUnits="userSpaceOnUse" x1="0" y1="0" x2="30" y2="30"><stop offset="0" stopColor="#4cc9fd" /><stop offset=".6" stopColor="#0f87de" /><stop offset="1" stopColor="#0173d0" /></linearGradient></defs>
          <path d="M1 0h13.500v14.500H0V1zM15.500 0H29l1 1v13.500H15.500zM0 15.500h14.500V30H1l-1-1zM15.500 15.500H30V29l-1 1H15.500z" fill="url(#win)" />
        </svg>
      </button>
      <label className="ml-[17px] flex h-10 w-[274px] items-center gap-3 rounded-full border border-[#dcdcdc] border-b-[#bebebe] bg-[#fafafa] pl-[13px]">
        <Search size={20} strokeWidth={2} />
        <input aria-label="Wyszukaj" placeholder="Wyszukaj" className="w-44 bg-transparent text-[16px] outline-none placeholder:text-[#5c5c5c]" />
      </label>
      <button aria-label="Widok zadań" className="ml-4">
        <svg viewBox="0 0 30 30" className="size-[30px]">
          <path d="M0 9h22v19H0z" fill="#2f2f2f" /><path d="M8 1h21v20H8z" fill="#f4f4f4" stroke="#dcdcdc" strokeWidth=".6" /><path d="M8 9h14v12H8z" fill="#b9b9b9" />
        </svg>
      </button>
      <div className="ml-4 flex h-full items-center gap-[7px]">
        {apps.map((a) => (
          <button key={a.label} aria-label={a.label} className={"flex h-[49px] w-12 flex-col items-center rounded-md pt-[9px] " + (a.mark === "active" ? "bg-[#f9f9f9] shadow-sm" : "")}>
            <svg viewBox="0 0 30 30" className="size-[30px] shrink-0">{a.art}</svg>
            {a.mark === "dot" && <span className="mt-[5px] h-1 w-2 rounded-full bg-[#858585]" />}
            {a.mark === "active" && <span className="mt-[5px] h-1 w-5 rounded-full bg-[#0078d4]" />}
            {a.mark === "bar" && <span className="mt-[5px] flex h-1 w-[30px] items-center"><span className="size-1 rounded-full bg-[#0078d4]" /><span className="h-[2px] flex-1 bg-[#858585]" /></span>}
          </button>
        ))}
      </div>
      <div className="ml-auto flex items-center pr-[26px]">
        <button aria-label="Pokaż ukryte ikony"><ChevronUp size={20} strokeWidth={1.600} /></button>
        <button aria-label="OneDrive" className="ml-5">
          <svg viewBox="0 0 22 22" className="size-[22px]">
            <path d="M5 17a4.500 4.500 0 0 1-.5-9C6 3 14 2 16 7c3 0 5 2 5 5s-2 5-4 5z" fill="#6a6a6a" stroke="#333" /><path d="M5 16c0-5 6-7 12-8" stroke="#c6c6c6" strokeWidth="3" fill="none" />
            <circle cx="15.500" cy="15" r="6" fill="#0f6cbd" /><path d="M15.500 14v4.500M15.500 11v1.800" stroke="#fff" strokeWidth="1.800" />
          </svg>
        </button>
        <button className="ml-[22px] text-[14px]">POL</button>
        <button aria-label="Sieć, głośność i bateria" className="ml-[23px] flex items-center gap-2">
          <svg viewBox="0 0 22 24" className="h-6 w-[22px]" fill="none" stroke="#1b1b1b" strokeWidth="1.300">
            <path d="M14 3H3.500A2 2 0 0 0 1.500 5v10a2 2 0 0 0 2 2h12M6 21h9M8 17v4M13 17v4M18 10v12" /><rect x="15.500" y="2.500" width="5" height="7" rx="1" /><path d="M16 5h4" />
          </svg>
          <svg viewBox="0 0 22 22" className="size-[22px]" fill="none" stroke="#1b1b1b" strokeWidth="1.300" strokeLinejoin="round">
            <path d="M2 8h3.500L10 4v14l-4.500-4H2zM13 8.500c1 1.500 1 3.500 0 5" /><path d="M15.500 6.500c2 3 2 6 0 9M18 4.500c3 4 3 9 0 13" stroke="#b0b0b0" />
          </svg>
          <svg viewBox="0 0 22 20" className="h-5 w-[22px]" fill="none" stroke="#1b1b1b" strokeWidth="1.400">
            <path d="M8 4.500h8.500a2 2 0 0 1 2 2v8a2 2 0 0 1-2 2H5a2 2 0 0 1-2-2V11" /><path d="M8 6.500h8v8H5v-4z" fill="#1b1b1b" /><path d="M20.200 8.500v4" strokeWidth="2" /><path d="M5 0L1 6h2.500L2 10.500 7 4.500H4.500z" fill="#1b1b1b" stroke="none" />
          </svg>
        </button>
        <button className="ml-5 pb-px text-right text-[14px] leading-5">10:50<br />20.09.2024</button>
        <button aria-label="Powiadomienia" className="ml-3">
          <svg viewBox="0 0 17 20" className="h-5 w-[17px]" fill="#003e92"><path d="M8.500 0c4 0 6.500 3 6.500 6.500V12l2 3v1H0v-1l2-3V6.500C2 3 4.500 0 8.500 0zM5.500 17h6c0 3.500-6 3.500-6 0z" /></svg>
        </button>
      </div>
    </footer>
  );
}

export default function App() {
  return (
    <div className="flex h-screen flex-col overflow-hidden bg-[#56575c] font-['Noto_Sans','Open_Sans',sans-serif]">
      <TabBar />
      <Toolbar />
      <div className="flex min-h-0 flex-1">
        <div className="flex min-w-0 flex-1 pb-1 pl-[5px]">
          <Page />
          <ScrollRail />
        </div>
        <Sidebar />
      </div>
      <Taskbar />
    </div>
  );
}
